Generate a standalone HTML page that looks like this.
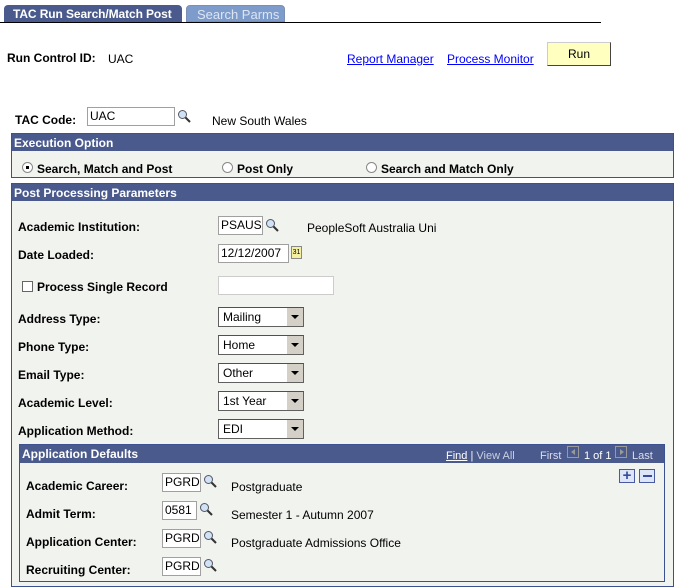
<!DOCTYPE html>
<html><head><style>
*{margin:0;padding:0;box-sizing:border-box}
body{width:677px;height:588px;background:#fff;font-family:"Liberation Sans",Arial,sans-serif;font-size:12px;color:#000;position:relative;overflow:hidden}
.a{position:absolute;white-space:nowrap}
.b{font-weight:bold}
.hdr{position:absolute;background:#4a5a8c;color:#fff;font-weight:bold;font-size:12px;padding:2px 0 0 2px;height:17px}
.box{position:absolute;border:1px solid #3c5290;background:#f1f3ef}
.inp{position:absolute;background:#fff;border:1px solid #a0a0a0;height:19px;font-size:12px;padding:1px 2px}
.sel{position:absolute;background:#fff;border:1px solid #606060;border-top-color:#505050;height:20px;font-size:12px;padding:2px 4px}
.sel:after{content:"";position:absolute;right:0;top:0;width:16px;height:18px;background:#d4d0c8;border-left:1px solid #fff}
.sel i{position:absolute;right:4px;top:7px;width:0;height:0;border-left:4px solid transparent;border-right:4px solid transparent;border-top:4px solid #000;z-index:2}
.mag{position:absolute;width:14px;height:14px}
a{color:#00f;text-decoration:underline}
.rad{position:absolute;width:11px;height:11px;border-radius:50%;border:1px solid #888;background:#fff}
</style></head><body>
<!-- tabs -->
<div class="a" style="left:4px;top:5px;width:178px;height:18px;background:#4a5a8c;border-radius:4px 4px 0 0;color:#fff;font-weight:bold;font-size:12px;letter-spacing:-0.1px;padding:2px 0 0 9px">TAC Run Search/Match Post</div>
<div class="a" style="left:186px;top:5px;width:99px;height:17px;background:#7d9ccb;border:1px solid #7b8fb5;border-radius:4px 4px 0 0;color:#dde5f2;font-size:13px;padding:1px 0 0 10px">Search Parms</div>
<div class="a" style="left:0;top:22px;width:601px;height:1px;background:#000"></div>

<div class="a b" style="left:7px;top:51px">Run Control ID:</div>
<div class="a" style="left:108px;top:52px">UAC</div>
<a class="a" style="left:347px;top:52px">Report Manager</a>
<a class="a" style="left:447px;top:52px">Process Monitor</a>
<div class="a" style="left:547px;top:42px;width:64px;height:24px;background:#ffffc0;border:1px solid;border-color:#ccc #444 #444 #ccc;text-align:center;padding-top:4px">Run</div>

<div class="a b" style="left:15px;top:113px">TAC Code:</div>
<div class="inp" style="left:87px;top:107px;width:88px">UAC</div>
<svg class="mag" style="left:177px;top:109px" viewBox="0 0 14 14"><circle cx="5.5" cy="5.5" r="4" fill="#cfe3f5" stroke="#556"/><line x1="8.5" y1="8.5" x2="13" y2="13" stroke="#333" stroke-width="2"/></svg>
<div class="a" style="left:212px;top:114px">New South Wales</div>

<div class="box" style="left:11px;top:133px;width:663px;height:45px"></div>
<div class="hdr" style="left:12px;top:134px;width:661px">Execution Option</div>
<div class="rad" style="left:22px;top:162px"><div style="position:absolute;left:3px;top:3px;width:3px;height:3px;background:#000"></div></div>
<div class="a b" style="left:37px;top:162px">Search, Match and Post</div>
<div class="rad" style="left:222px;top:162px"></div>
<div class="a b" style="left:237px;top:162px">Post Only</div>
<div class="rad" style="left:366px;top:162px"></div>
<div class="a b" style="left:381px;top:162px">Search and Match Only</div>

<div class="box" style="left:11px;top:183px;width:663px;height:404px"></div>
<div class="hdr" style="left:12px;top:184px;width:661px">Post Processing Parameters</div>

<div class="a b" style="left:18px;top:220px">Academic Institution:</div>
<div class="inp" style="left:218px;top:216px;width:45px">PSAUS</div>
<svg class="mag" style="left:265px;top:218px" viewBox="0 0 14 14"><circle cx="5.5" cy="5.5" r="4" fill="#cfe3f5" stroke="#556"/><line x1="8.5" y1="8.5" x2="13" y2="13" stroke="#333" stroke-width="2"/></svg>
<div class="a" style="left:307px;top:221px">PeopleSoft Australia Uni</div>

<div class="a b" style="left:18px;top:248px">Date Loaded:</div>
<div class="inp" style="left:218px;top:244px;width:71px">12/12/2007</div>
<div class="a" style="left:291px;top:246px;width:11px;height:13px;background:#f5f0a0;border:1px solid #888;font-size:7px;text-align:center;line-height:11px">31</div>

<div class="a" style="left:22px;top:281px;width:11px;height:11px;border:1px solid #666;background:#fff"></div>
<div class="a b" style="left:37px;top:280px">Process Single Record</div>
<div class="inp" style="left:218px;top:276px;width:116px;border-color:#ccc"></div>

<div class="a b" style="left:18px;top:312px">Address Type:</div>
<div class="sel" style="left:218px;top:307px;width:86px">Mailing<i></i></div>
<div class="a b" style="left:18px;top:340px">Phone Type:</div>
<div class="sel" style="left:218px;top:335px;width:86px">Home<i></i></div>
<div class="a b" style="left:18px;top:368px">Email Type:</div>
<div class="sel" style="left:218px;top:363px;width:86px">Other<i></i></div>
<div class="a b" style="left:18px;top:396px">Academic Level:</div>
<div class="sel" style="left:218px;top:391px;width:86px">1st Year<i></i></div>
<div class="a b" style="left:18px;top:424px">Application Method:</div>
<div class="sel" style="left:218px;top:419px;width:86px">EDI<i></i></div>

<div class="box" style="left:19px;top:444px;width:646px;height:138px"></div>
<div class="hdr" style="left:20px;top:445px;width:644px;height:18px">Application Defaults</div>
<div class="a" style="left:446px;top:450px;color:#fff;font-size:11px"><span style="text-decoration:underline">Find</span> | <span style="color:#c8d0e0">View All</span></div>
<div class="a" style="left:540px;top:450px;color:#dde;font-size:11px">First</div>
<div class="a" style="left:567px;top:446px;width:12px;height:12px;border:1px solid #999;background:#4a5a8c"><div style="position:absolute;left:3px;top:2px;border-right:4px solid #999;border-top:3px solid transparent;border-bottom:3px solid transparent"></div></div>
<div class="a" style="left:584px;top:450px;color:#fff;font-size:11px">1 of 1</div>
<div class="a" style="left:615px;top:446px;width:12px;height:12px;border:1px solid #999;background:#4a5a8c"><div style="position:absolute;left:4px;top:2px;border-left:4px solid #999;border-top:3px solid transparent;border-bottom:3px solid transparent"></div></div>
<div class="a" style="left:632px;top:450px;color:#dde;font-size:11px">Last</div>
<div class="a" style="left:619px;top:469px;width:16px;height:14px;border:1px solid #4a5aa0;background:#dde6f8;color:#3a4a9a;font-weight:bold;font-size:15px;line-height:11px;text-align:center">+</div>
<div class="a" style="left:639px;top:469px;width:16px;height:14px;border:1px solid #4a5aa0;background:#dde6f8"><div style="position:absolute;left:3px;top:5px;width:9px;height:2px;background:#3a4a9a"></div></div>

<div class="a b" style="left:26px;top:479px">Academic Career:</div>
<div class="inp" style="left:162px;top:473px;width:39px">PGRD</div>
<svg class="mag" style="left:203px;top:474px" viewBox="0 0 14 14"><circle cx="5.5" cy="5.5" r="4" fill="#cfe3f5" stroke="#556"/><line x1="8.5" y1="8.5" x2="13" y2="13" stroke="#333" stroke-width="2"/></svg>
<div class="a" style="left:231px;top:480px">Postgraduate</div>
<div class="a b" style="left:26px;top:507px">Admit Term:</div>
<div class="inp" style="left:162px;top:501px;width:35px">0581</div>
<svg class="mag" style="left:199px;top:502px" viewBox="0 0 14 14"><circle cx="5.5" cy="5.5" r="4" fill="#cfe3f5" stroke="#556"/><line x1="8.5" y1="8.5" x2="13" y2="13" stroke="#333" stroke-width="2"/></svg>
<div class="a" style="left:231px;top:508px">Semester 1 - Autumn 2007</div>
<div class="a b" style="left:26px;top:535px">Application Center:</div>
<div class="inp" style="left:162px;top:529px;width:39px">PGRD</div>
<svg class="mag" style="left:203px;top:530px" viewBox="0 0 14 14"><circle cx="5.5" cy="5.5" r="4" fill="#cfe3f5" stroke="#556"/><line x1="8.5" y1="8.5" x2="13" y2="13" stroke="#333" stroke-width="2"/></svg>
<div class="a" style="left:231px;top:536px">Postgraduate Admissions Office</div>
<div class="a b" style="left:26px;top:563px">Recruiting Center:</div>
<div class="inp" style="left:162px;top:557px;width:39px">PGRD</div>
<svg class="mag" style="left:203px;top:558px" viewBox="0 0 14 14"><circle cx="5.5" cy="5.5" r="4" fill="#cfe3f5" stroke="#556"/><line x1="8.5" y1="8.5" x2="13" y2="13" stroke="#333" stroke-width="2"/></svg>
</body></html>
